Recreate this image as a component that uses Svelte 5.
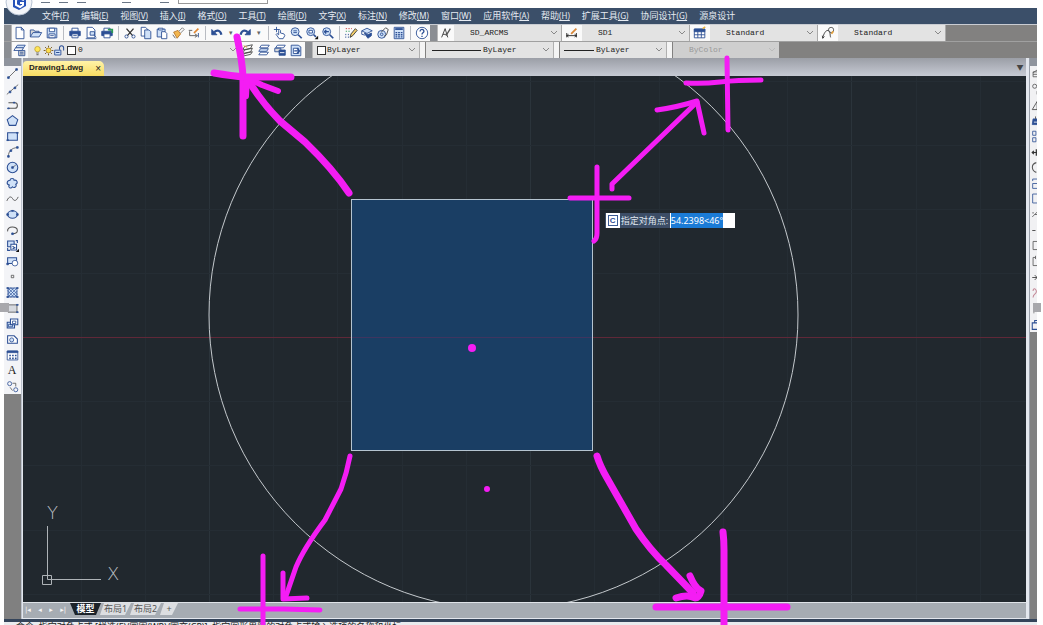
<script>
    import { onMount } from 'svelte';

    let polar = '54.2398<46°';
    let polarInput;

    const menus = [
        ['文件', 'F'], ['编辑', 'E'], ['视图', 'V'], ['插入', 'I'], ['格式', 'O'], ['工具', 'T'],
        ['绘图', 'D'], ['文字', 'X'], ['标注', 'N'], ['修改', 'M'], ['窗口', 'W'], ['应用软件', 'A'],
        ['帮助', 'H'], ['扩展工具', 'G'], ['协同设计', 'G'], ['源泉设计', '']
    ];

    // '|' is a separator, 'v' a small history arrow
    const standard = [
        'new', 'open', 'save', '|', 'print', 'preview', 'publish', '|',
        'cut', 'copy', 'paste', 'brush', 'edit', '|', 'undo', 'v', 'redo', 'v', '|',
        'pan', 'zoom', 'zoomwin', 'zoomprev', '|', 'props', 'palette', 'clip', 'calc', '|', 'help'
    ];

    const styles = [
        { icon: 'textstyle', value: 'SD_ARCMS' },
        { icon: 'dimstyle', value: 'SD1' },
        { icon: 'tablestyle', value: 'Standard' },
        { icon: 'leader', value: 'Standard' }
    ];

    const draw = [
        'line', 'xline', 'pline', 'polygon', 'rect', 'arc', 'circle', 'cloud', 'spline', 'ellipse', 'ellarc',
        'insert', 'block', 'point', 'hatch', 'gradient', 'copyblock', 'region', 'table', 'text', 'more'
    ];

    const modify = [
        'erase', 'mcopy', 'mirror', 'offset', 'array', 'move', 'rotate', 'scale', 'stretch',
        'trim', 'extend', 'break', 'join', 'chamfer', 'fillet', 'explode', 'group'
    ];

    const icons = {
        new: '<path class="p" d="M3.500 1.500h6l3 3v10h-9z"/><path d="M9.500 1.500v3h3"/>',
        open: '<path class="g" d="M1.500 12.500v-8h4l1 1.500h5v2"/><path class="b" d="M1.500 12.500l3-5h10l-3 5z"/>',
        save: '<path class="b" d="M2.500 2.500h11v11h-11z"/><path class="p" d="M5 2.500h6v4H5zM4.500 9h7v4.500h-7z"/><path d="M6 11h4"/>',
        print: '<path class="p" d="M4.500 6V2.500h7V6"/><path class="d" d="M2 6h12v5H2z"/><path class="p" d="M4.500 9h7v4.500h-7z"/><path d="M6 11h4"/>',
        preview: '<path class="p" d="M3.500 1.500h6l3 3v9h-9z"/><path class="b" d="M7 6.500h5v4H7z"/><path d="M2 14.500h12M11 10l3 3"/>',
        publish: '<path class="p" d="M4.500 6V2.500h7V6"/><path class="d" d="M2 6h12v5H2z"/><path class="p" d="M4.500 9h7v4.500h-7z"/><path stroke="#2a9a55" stroke-width="2" d="M9 4h5v4"/>',
        cut: '<path stroke="#333" stroke-width="1.500" d="M4 3l7 8M12 3l-7 8"/><circle cx="4" cy="12" r="1.800"/><circle cx="12" cy="12" r="1.800"/>',
        copy: '<path class="p" d="M2.500 1.500h5l2 2v8h-7z"/><path class="b" d="M6.500 4.500h5l2 2v8h-7z"/>',
        paste: '<path class="b" d="M2.500 3.500h9v9h-9z"/><path class="p" d="M4 2.500h5v2H4z"/><path class="p" d="M7.500 6.500h4l2 2v6h-6z"/>',
        brush: '<path stroke="#777" d="M9 6l4-4 2 2-4 4"/><path fill="#f3b64e" stroke="#b5762c" d="M3 7l5-2 3 4-4 5z"/><path stroke="#555" d="M2 10l3 4"/>',
        edit: '<path stroke="#555" d="M3 6v5h8M9 9l3 2-3 2M2 5h4"/><path stroke="#e08833" stroke-width="2" d="M8 8l5-5"/><path d="M13 8v5"/>',
        undo: '<path class="d" d="M2 4v6h6z"/><path stroke-width="2.500" d="M5 7c3-3 7-2 8 3"/>',
        redo: '<path class="d" d="M14 4v6H8z"/><path stroke-width="2.500" d="M11 7C8 4 4 5 3 10"/>',
        pan: '<path class="p" d="M6.500 10V5l1-1 1 1v3l4 1 1 2-2 3.500H7L3.500 9.500l1-1z"/><path d="M4 1v6M1 4h6"/>',
        zoom: '<circle class="b" cx="7" cy="6.500" r="4.500"/><path d="M5 5.500h4M5 7.500h4"/><path stroke-width="2" d="M10.500 10l4 4"/>',
        zoomwin: '<circle class="b" cx="6.500" cy="6.500" r="4.500"/><path class="p" d="M4.500 5h4v3h-4z"/><path stroke-width="2" d="M10 10l2.500 2.500"/><path fill="#111" stroke="none" d="M15 11v4h-4z"/>',
        zoomprev: '<circle class="b" cx="6.500" cy="6.500" r="4.500"/><path stroke-width="1.500" d="M4 6.500h5M6 4.500l-2 2 2 2"/><path stroke-width="2" d="M10 10l4 4"/>',
        props: '<path stroke="#c63c3c" stroke-dasharray="1.500" d="M2 3h7"/><path stroke="#2a9a55" stroke-dasharray="1.500" d="M2 6h6"/><path stroke-dasharray="1.500" d="M2 9v5M5 9v5"/><path stroke="#333" d="M7 13l1-4 5-6 2 2-5 6z" fill="#f6cf67"/>',
        palette: '<path class="b" d="M2 5.500l6-3 6 3-6 3z"/><path class="d" d="M5 8l4 2 4-2v3l-4 3z"/><path d="M2 5.500v4l4 1"/>',
        clip: '<circle class="b" cx="6.500" cy="9.500" r="4.500"/><circle cx="6.500" cy="9.500" r="1.500"/><path stroke="#444" d="M6 7l5-5 3 2-2 6-3 2"/>',
        calc: '<path class="b" d="M2.500 1.500h11v13h-11z"/><path class="d" d="M4 3h8v1H4z"/><path stroke-dasharray="2 1" stroke-width="1.500" d="M4 7.500h8M4 10h8M4 12.500h8"/>',
        help: '<circle class="p" cx="8" cy="8" r="6.500"/><path stroke-width="1.500" d="M5.800 6.200c0-3.200 4.600-3 4.400 0C10 8 8 7.700 8 9.800M8 11.200v1.300"/>',
        textstyle: '<path stroke="#333" d="M3 13L7 3l3 10M4.500 9.500h4"/><path stroke="#555" stroke-width="1.500" d="M13 3L8 11"/>',
        dimstyle: '<path stroke="#222" d="M2 8v5M13 8v5M2 11h11M4 9.500L2 11l2 1.500M11 9.500l2 1.500-2 1.500"/><path stroke="#d98838" stroke-width="2" d="M7 9l6-6"/>',
        tablestyle: '<path class="p" d="M1.500 3.500h12v10h-12z"/><path class="d" d="M1.500 3.500h12v3h-12z"/><path d="M1.500 10h12M5.500 6v7.500M9.500 6v7.500"/><path stroke="#efb53c" stroke-width="1.500" d="M11 3l3-2"/>',
        leader: '<path stroke="#333" d="M2 14c1-5 3-9 6-9s2 5 3 8M2 14l-.500-3M2 14l2-2"/><circle stroke="#555" cx="11.500" cy="4.500" r="3"/><path stroke="#e6a23c" stroke-width="2" d="M12 9l2-3"/>',
        layers: '<path class="b" d="M5 2.500h9l-2 3H3z"/><path class="p" d="M3 5.500h9l-2 3H1z"/><path class="g" d="M6.500 8.500h7v6h-7z"/><path d="M8 10.500h4M8 12.500h4"/>',
        bulb: '<circle cx="8" cy="6" r="4" fill="#ffe658" stroke="#b6982a"/><path stroke="#777" stroke-width="1.500" d="M6 11.500h4M6.500 14h3"/>',
        sun: '<circle cx="8" cy="8" r="3.500" fill="#ffe04a" stroke="#a77b17"/><path stroke="#70500e" stroke-width="1.300" d="M8 1v2.500M8 12.500V15M1 8h2.500M12.500 8H15M3 3l2 2M11 11l2 2M13 3l-2 2M5 11l-2 2"/>',
        lock: '<path class="b" stroke-width="1.300" d="M1 7.500h9v7H1z"/><path d="M8 7V4c0-4 6-4 6 0v4M3 11h5" stroke-width="1.500"/>',
        layer1: '<path stroke="#444" d="M4 4l9-2-2 4-9 2zM4 8l9-2-2 4-9 2zM4 12l9-2-2 3-9 2z"/><path stroke="#e0a23c" d="M3 3l4 2"/>',
        layer2: '<path class="p" d="M5 2.500h9l-2 3H3z"/><path class="b" d="M4 6.500h9l-2 3H2z"/><path class="p" d="M4 10.500h9l-2 3H2z"/>',
        layer3: '<path class="p" d="M5 2.500h9l-2 3H3z"/><path class="g" d="M2 6h7v4H2z"/><path class="d" d="M7 8h7v6H7z"/><path stroke="#fff" d="M8 11h5"/>',
        layer4: '<path class="b" d="M2.500 2.500h8l3 2v10h-11z"/><path class="p" d="M5 6h6v6H5z"/><path stroke-width="1.500" d="M6 9h6M9 6l3 3-3 3"/>',
        line: '<path stroke="#555" d="M3 13L13 3"/><path class="d" d="M2 12h2v2H2zM12 2h2v2h-2z"/>',
        xline: '<path stroke="#555" d="M1 14L15 2"/><path class="d" d="M4 10h2v2H4zM10 5h2v2h-2z"/>',
        pline: '<path d="M3 4.500h8c4 0 4 7 0 7H3" stroke="#555" stroke-width="1.300"/><path class="d" d="M2 11h2v1H2zM9 4h2v1H9z"/>',
        polygon: '<path class="b" stroke-width="1.300" d="M8 2l6.500 5-2.500 7H4L1.500 7z"/>',
        rect: '<path class="b" stroke-width="1.300" d="M2 3.500h12v9H2z"/><path class="d" d="M1 12h2v1H1zM13 3h2v1h-2z"/>',
        arc: '<path stroke="#555" d="M3 14C3 8 6 4 14 3"/><path class="d" d="M2 13h2v2H2zM5 6h2v2H5zM13 2h2v2h-2z"/>',
        circle: '<circle class="b" stroke-width="1.300" cx="8" cy="8" r="6.500"/><path stroke="#555" d="M8 8l4-3"/><path class="d" d="M7 7h2v2H7z"/>',
        cloud: '<path class="b" stroke-width="1.300" d="M5 4c0-3 5-3 5 0 4-1 5 4 2 5 2 3-2 5-4 3-2 3-6 1-4-2-4-1-3-6 1-6z"/>',
        spline: '<path stroke="#444" d="M1 11c3-7 6-5 7-3s4 5 7-2"/>',
        ellipse: '<ellipse class="b" stroke-width="1.300" cx="8" cy="8" rx="6" ry="4.500"/><path class="d" d="M1 7h2v2H1zM13 7h2v2h-2zM7 3h2v1H7z"/>',
        ellarc: '<path stroke="#555" stroke-width="1.300" d="M2 9c-1-7 12-7 12-1 0 3-3 4-6 4"/><path class="d" d="M7 11h2v2H7z"/>',
        insert: '<path class="b" stroke-width="1.300" d="M2 2.500h8v7H2z"/><path class="p" stroke-width="1.300" d="M6 6.500h7v7H6z"/><path stroke-width="1.300" d="M2 11v3h3M12 2h2v3M8 9l3 2-3 1"/><path fill="#111" stroke="none" d="M16 12v4h-4z"/>',
        block: '<path class="b" stroke-width="1.300" d="M2 3.500h11v7H2z"/><circle class="p" cx="11" cy="10" r="3.500"/><path class="d" d="M1 10h2v2H1z"/>',
        point: '<path stroke="#555" d="M6.500 6.500h3v3h-3z"/>',
        hatch: '<path class="b" d="M2.500 2.500h11v11h-11z"/><path stroke-width=".8" d="M2 6l4-4M2 10l8-8M2 14L14 2M6 14l8-8M10 14l4-4M2 10l4 4M2 6l8 8M2 2l12 12M6 2l8 8"/><path class="d" d="M1 2h2v1H1zM13 2h2v1h-2zM1 13h2v1H1zM13 13h2v1h-2z"/>',
        gradient: '<path fill="#d6d9df" stroke="#555" d="M2.500 3.500h11v9h-11z"/><path class="d" d="M13 3h2v1h-2zM13 12h2v1h-2z"/>',
        copyblock: '<path class="b" stroke-width="1.300" d="M1.500 6.500h9v7h-9z"/><path class="p" stroke-width="1.300" d="M5.500 2.500h9v7h-9z"/><path d="M8 5h4v3H8zM3 9h5v3H3z"/>',
        region: '<path class="p" stroke-width="1.300" d="M2 12.500v-9h8l4 4v5z"/><circle class="b" cx="7" cy="8.500" r="2.500"/>',
        table: '<path class="p" d="M1.500 2.500h13v11h-13z"/><path class="d" d="M1.500 2.500h13v2h-13z"/><path stroke-dasharray="2 1.500" stroke-width="2" d="M4 8h9M4 11.500h9"/>',
        more: '<circle cx="4.500" cy="4.500" r="2.500"/><circle cx="12" cy="12" r="2.500"/><path stroke="#555" d="M8 4h4v4M5 9l3 4"/>',
        erase: '<path stroke="#555" d="M5 7l6-4v3H5v6h9M5 9h6"/>',
        mcopy: '<circle cx="7" cy="4" r="2.500" stroke="#555"/><path stroke="#555" d="M10 10v4"/>',
        mirror: '<path stroke="#444" d="M10 3L4 13h6z"/>',
        offset: '<path class="d" d="M5 6h7v7H4z"/><path d="M8 3v3" stroke="#444"/><path stroke="#fff" d="M6 10h4"/>',
        array: '<path d="M4.500 1.500h4v5h-4zM4.500 9.500h4v5h-4zM11.500 1.500h4v5h-4zM11.500 9.500h4v5h-4z"/>',
        move: '<path stroke="#333" stroke-width="1.500" d="M4 8h9M6 6L4 8l2 2M9 4v8"/>',
        rotate: '<path stroke="#555" stroke-width="1.300" d="M9 2C2 4 3 12 9 14"/>',
        scale: '<path d="M4.500 14V8h6M4.500 5V2.500h9M4.500 14h9"/>',
        stretch: '<path d="M4.500 2.500h10v11h-10z"/>',
        trim: '<path stroke="#555" d="M4 6h2M4 11l6-6M7 8h3"/>',
        extend: '<path stroke="#555" stroke-width="1.300" d="M4 8h4"/>',
        break: '<path stroke="#555" d="M10 3H5v10h6"/>',
        join: '<path stroke="#555" d="M8 3H5v10h6M8 1v4"/>',
        chamfer: '<path stroke="#333" d="M4 8h6M7 5l3 3-3 3"/>',
        fillet: '<path stroke="#c58a98" stroke-width="1.300" d="M5 14c0-5 5-4 4-8S5 3 5 6"/>',
        explode: '<path stroke="#777" d="M6 2v12"/>',
        group: '<path stroke-width="1.300" d="M4 6h10v8H4zM7 6V3h4"/>'
    };

    // freehand marks over the window: [path, pen width]
    const marks = [
        ['M237 37Q243 65 243 80V136', 7],
        ['M214 73Q232 76 245 77H291', 7],
        ['M349 193Q333 169 305 142L280 121Q262 103 248 80', 7],
        ['M278 91L262 85L247 78L246 96', 6],
        ['M727 58L728 130', 5],
        ['M686 83Q703 84 720 82T761 80', 5],
        ['M612 189V184L640 157L697 102', 5],
        ['M657 110Q678 107 697 101L704 133', 5],
        ['M597 167V233Q597 239 594 241', 5],
        ['M570 198H629', 5],
        ['M350 456Q347 472 341 489L325 520Q304 548 296 567L286 596', 5],
        ['M283 573V599L307 598', 5],
        ['M263 556V625', 5],
        ['M240 609H284L320 610', 5],
        ['M597 456Q600 466 607 478L636 529Q650 550 666 565L693 593', 7],
        ['M690 576Q695 588 701 591Q699 598 695 598Q688 594 676 598', 7],
        ['M723 532Q724 540 724 550V625', 7],
        ['M656 607H787', 7]
    ];

    const gridX = [58, 122, 186, 250, 314, 379, 443, 507, 571, 636, 700, 764, 828, 893, 957];
    const gridY = [5, 69, 133, 197, 325, 389, 454, 518];

    onMount(() => {
        polarInput.focus({ preventScroll: true });
        polarInput.select();
    });
</script>

{#snippet icon(name)}
    <svg class="icon" viewBox="0 0 16 16" aria-hidden="true">{@html icons[name]}</svg>
{/snippet}

{#snippet tool(name)}
    <button class="tool" aria-label={name}>
        {#if name == 'text'}<span class="glyph">A</span>{:else}{@render icon(name)}{/if}
    </button>
{/snippet}

{#snippet chevron()}
    <svg class="chevron" viewBox="0 0 8 8" aria-hidden="true"><path d="M1 2l3 3 3-3" /></svg>
{/snippet}

<div class="window">
    <header class="title">
        <div class="scraps"><i></i><i></i><i></i><i></i><i></i></div>
        <div class="workspace"></div>
    </header>

    <nav class="menu">
        {#each menus as [name, key]}
            <button>{name}{#if key}<small>({key})</small>{/if}</button>
        {/each}
        <div class="logo">
            <svg viewBox="0 0 28 28" aria-hidden="true">
                <circle cx="14" cy="14" r="13" fill="#f4f6fa" stroke="#b9c4d4" />
                <path fill="#2450b8" d="M8 11l6-4 7 3v8l-7 4-6-3z" />
                <path fill="none" stroke="#fff" stroke-width="2" d="M19 12l-5-2-3 2v5l4 2 3-2v-2h-3" />
            </svg>
        </div>
    </nav>

    <div class="bars">
        <div class="bar">
            <span class="grip"></span>
            <div class="tools">
                {#each standard as name}
                    {#if name == '|'}<span class="sep"></span>
                    {:else if name == 'v'}<button class="drop" aria-label="history">▾</button>
                    {:else}{@render tool(name)}{/if}
                {/each}
            </div>
            <span class="grip"></span>
            {#each styles as s}
                <div class="style">
                    {@render tool(s.icon)}
                    <label class="combo">
                        <select aria-label={s.icon}><option>{s.value}</option></select>
                        {@render chevron()}
                    </label>
                </div>
            {/each}
        </div>

        <div class="bar">
            <span class="grip"></span>
            <div class="tools">{@render tool('layers')}</div>
            <label class="combo layer">
                <span class="state">{@render icon('bulb')}{@render icon('sun')}{@render icon('lock')}</span>
                <span class="swatch"></span>
                <select aria-label="layer"><option>0</option></select>
                {@render chevron()}
            </label>
            <div class="tools layers">
                {#each ['layer1', 'layer2', 'layer3', 'layer4'] as name}{@render tool(name)}{/each}
            </div>
            <span class="grip"></span>
            <label class="combo prop">
                <span class="swatch"></span>
                <select aria-label="color"><option>ByLayer</option></select>
                {@render chevron()}
            </label>
            <span class="split"></span>
            <label class="combo ltype">
                <span class="stroke long"></span>
                <select aria-label="linetype"><option>ByLayer</option></select>
                {@render chevron()}
            </label>
            <span class="split"></span>
            <label class="combo prop">
                <span class="stroke"></span>
                <select aria-label="lineweight"><option>ByLayer</option></select>
                {@render chevron()}
            </label>
            <span class="split"></span>
            <label class="combo prop off">
                <select aria-label="plot style" disabled><option>ByColor</option></select>
                {@render chevron()}
            </label>
        </div>
    </div>

    <main>
        <aside class="side">
            <div class="cap"></div>
            <div class="draw">
                {#each draw as name}{@render tool(name)}{/each}
            </div>
        </aside>

        <section class="doc">
            <div class="files">
                <div class="file">Drawing1.dwg <button aria-label="close">×</button></div>
                <button class="list" aria-label="documents">▼</button>
            </div>

            <div class="canvas">
                <svg class="drawing" viewBox="0 0 1003 526" preserveAspectRatio="none" aria-hidden="true">
                    {#each gridX as x}
                        <path class={[186, 507, 828].includes(x) ? 'grid major' : 'grid'} d="M{x}.5 0V526" />
                    {/each}
                    {#each gridY as y}
                        <path class="grid" d="M0 {y}.5H1003" />
                    {/each}
                    <rect class="axis" x="0" y="261" width="1003" height="1" />
                    <circle cx="480.5" cy="239" r="294.500" />
                    <rect class="window-select" x="328.5" y="123.5" width="241" height="251" />
                    <rect class="axis inner" x="329" y="261" width="240" height="1" />
                    <g class="ucs">
                        <path d="M24.500 450V503.500H78M19.500 499.500h9v9h-9z" />
                        <text x="24" y="443">Y</text>
                        <text x="84" y="504">X</text>
                    </g>
                </svg>
                <label class="prompt">
                    <span class="cmd">C</span>
                    <span class="ask">指定对角点:</span>
                    <input bind:this={polarInput} bind:value={polar} />
                </label>
            </div>

            <div class="layouts">
                <div class="nav">
                    <button>|◂</button><button>◂</button><button>▸</button><button>▸|</button>
                </div>
                <button class="layout active">模型</button>
                <button class="layout">布局1</button>
                <button class="layout">布局2</button>
                <button class="layout add">+</button>
            </div>
        </section>

        <aside class="side right">
            <div class="cap"></div>
            <div class="modify">
                {#each modify as name}{@render tool(name)}{/each}
            </div>
        </aside>
    </main>

    <footer>
        <p>命令: 指定对角点或 [栏选(F)/圈围(WP)/圈交(CP)]: 指定图形界限的对角点或输入选项的名称和坐标:</p>
    </footer>

    <span class="handle"></span>
    <span class="handle end"></span>

    <svg class="ink" viewBox="0 0 1043 625" preserveAspectRatio="none" aria-hidden="true">
        {#each marks as [d, width]}
            <path {d} stroke-width={width} />
        {/each}
        <circle cx="472" cy="348" r="4" />
        <circle cx="487" cy="489" r="3" />
    </svg>
</div>

<style>
    :global(body) { margin: 0; background: #fff; }

    .window {
        position: relative;
        box-sizing: border-box;
        height: 100vh;
        padding: 0 6px 0 4px;
        display: flex;
        flex-direction: column;
        overflow: hidden;
        font: 9px/16px "Noto Sans", "Noto Sans CJK SC", sans-serif;
    }
    button, select, input { font: inherit; color: inherit; margin: 0; padding: 0; border: 0; background: none; border-radius: 0; }
    small { font-size: 8px; text-decoration: underline; }

    .title { height: 8px; flex: none; display: flex; padding-left: 37px; }
    .scraps { display: flex; gap: 9px; width: 137px; padding-top: 2px; }
    .scraps i { width: 9px; height: 1px; background: #6b7787; }
    .scraps i:nth-child(3) { margin-right: 27px; }
    .scraps i:nth-child(4) { margin-right: 20px; }
    .workspace { width: 88px; height: 3px; border: 1px solid #999; border-top: 0; }

    .menu {
        position: relative;
        height: 16px;
        flex: none;
        display: flex;
        gap: 12px;
        padding-left: 38px;
        background: #3b4f69;
        color: #e6ebf2;
        line-height: 14px;
        white-space: nowrap;
    }
    .logo { position: absolute; left: 1px; top: -20px; width: 28px; height: 28px; }

    .bars { flex: none; background: #828180; }
    .bar { display: flex; height: 16px; border-top: 1px solid #c9ccd2; }
    .bar + .bar { border-color: #a0a0a0; }
    .tools { display: flex; align-items: center; background: #fafafa; }
    .tool { width: 16px; height: 16px; display: flex; align-items: center; justify-content: center; flex: none; }
    .icon { width: 14px; height: 14px; display: block; fill: none; stroke: #2c4f94; }
    .icon :global(.p) { fill: #fff; }
    .icon :global(.b) { fill: #cfe1f8; }
    .icon :global(.g) { fill: #d8d8d8; }
    .icon :global(.d) { fill: #2c4f94; }
    .sep { width: 1px; height: 14px; margin: 0 3px; background: #b9bcc2; }
    .drop { width: 12px; font-size: 7px; color: #666; }
    .grip { width: 7px; flex: none; background: #8b8e93; border-right: 1px solid #b8b8b8; }
    .style { display: flex; width: 128px; border-right: 1px solid #aaa; box-sizing: border-box; }
    .style:nth-of-type(2) { width: 124px; }
    .style .tool { width: 20px; background: #fafafa; }
    .style:nth-of-type(2) .tool { width: 16px; }
    .combo { flex: 1; min-width: 0; display: flex; align-items: center; padding: 0 3px; background: #e3e3e3; box-sizing: border-box; color: #222; }
    select { appearance: none; flex: 1; min-width: 0; font: 8px/14px "Liberation Mono", monospace; }
    .style select { padding-left: 13px; }
    .chevron { width: 8px; height: 8px; flex: none; fill: none; stroke: #888; }
    .swatch { width: 7px; height: 7px; flex: none; border: 1px solid #333; background: #fff; margin-right: 1px; }
    .layer { flex: none; width: 212px; padding-left: 4px; }
    .state { display: flex; }
    .state .icon { width: 11px; height: 13px; }
    .layer .swatch { margin: 0 2px; }
    .layers { width: 65px; }
    .prop { flex: none; width: 106px; padding-left: 4px; }
    .ltype { flex: none; width: 127px; padding-left: 6px; }
    .split { width: 5px; margin-right: 1px; border-left: 1px solid #b0b0b0; background: #f4f4f4; }
    .stroke { width: 30px; height: 1px; margin-right: 2px; background: #222; }
    .long { width: 49px; }
    .off { color: #999; background: #cfcfcf; }
    .off select { padding-left: 12px; opacity: 1; }
    .off .chevron { stroke: #bbb; }

    main { flex: 1; min-height: 0; display: flex; background: #808080; }
    .side { width: 17px; flex: none; overflow: hidden; border-right: 1px solid #bcc2cc; }
    .cap { height: 8px; background: #8f949d; }
    .draw { height: 328px; display: flex; flex-direction: column; background: #f3f4f7; }
    .draw .tool, .modify .tool { flex: 1; min-height: 0; height: auto; }
    .draw .icon, .modify .icon { width: 13px; height: 13px; }
    .glyph { font: 12px/15px "Liberation Serif", serif; color: #222; }
    .right { width: 7px; border-right: 0; border-left: 1px solid #9aa0aa; }
    .modify { height: 266px; width: 14px; display: flex; flex-direction: column; align-items: flex-start; background: #f1f1f3; }
    .modify .tool { width: 11px; }
    .modify .icon { flex: none; }

    .doc { flex: 1; min-width: 0; display: flex; flex-direction: column; border: 1px solid #e3e7ee; border-top: 0; border-right-width: 3px; }
    .files { height: 18px; flex: none; display: flex; align-items: flex-end; justify-content: space-between; background: linear-gradient(#9b9ea6, #c6cad3); }
    .file {
        display: flex;
        justify-content: space-between;
        width: 72px;
        height: 15px;
        padding: 0 3px 0 6px;
        color: #222;
        background: linear-gradient(#fff3a8, #f8dc62);
        border-radius: 4px 5px 0 0;
        font: bold 8px/13px "Liberation Sans", sans-serif;
        white-space: nowrap;
    }
    .file button { font-size: 10px; font-weight: normal; }
    .list { width: 12px; color: #444; font-size: 7px; }

    .canvas { position: relative; flex: 1; min-height: 0; background: #21282e; overflow: hidden; }
    .drawing { display: block; width: 100%; height: 100%; }
    .grid { stroke: #252d34; fill: none; }
    .major { stroke: #2b343b; }
    .axis { fill: #602838; }
    .inner { fill: #3f3560; }
    .drawing circle { fill: none; stroke: #c4c9cd; }
    .window-select { fill: #1a3e64; stroke: #b5c4d0; }
    .ucs { fill: none; stroke: #aeb3b7; }
    .ucs text { fill: #b9bec2; stroke: none; font: 200 18px "DejaVu Sans", sans-serif; }

    .prompt { position: absolute; left: 58%; top: 26%; display: flex; height: 15px; line-height: 15px; background: #3c4d66; color: #dfe5ee; }
    .cmd { width: 8px; height: 9px; margin: 2px 3px; border: 1px solid #3d5c94; outline: 2px solid #fff; background: #fff; color: #2c4f94; font: bold 8px/9px "Liberation Sans", sans-serif; text-align: center; }
    .ask { width: 49px; white-space: nowrap; }
    .prompt input { width: 64px; padding-left: 1px; background: #fff; color: #222; outline: none; }
    .prompt input::selection { background: #1b7bd6; color: #fff; }

    .layouts { height: 15px; flex: none; display: flex; border-top: 1px solid #dfe3e8; background: #a6acb3; line-height: 12px; }
    .nav { box-sizing: border-box; display: flex; width: 47px; justify-content: space-between; padding: 0 4px 0 2px; color: #f4f4f4; font: 7px/13px "DejaVu Sans", sans-serif; white-space: nowrap; }
    .nav button { flex: none; }
    .layout { width: 31px; height: 12px; margin-right: -1px; color: #555; background: #dcdee1; clip-path: polygon(4px 0, 100% 0, calc(100% - 6px) 100%, 0 100%); }
    .layout.active { background: #1b2229; color: #fff; font-weight: bold; clip-path: polygon(0 0, 100% 0, calc(100% - 5px) 100%, 5px 100%); }
    .layout.add { width: 18px; }

    footer { height: 3px; flex: none; overflow: hidden; border-top: 3px solid #34445a; background: #e9ebee; }
    footer p { margin: 0; padding-left: 12px; line-height: 9px; color: #222; white-space: nowrap; }

    .handle { position: absolute; left: 0; top: 303px; width: 9px; height: 9px; background: #a8a8ac; }
    .end { left: auto; right: 2px; width: 8px; }
    .ink { position: absolute; inset: 0; width: 100%; height: 100%; pointer-events: none; fill: none; stroke: #f41df4; stroke-linecap: round; stroke-linejoin: round; }
    .ink circle { fill: #f41df4; stroke: none; }
</style>
